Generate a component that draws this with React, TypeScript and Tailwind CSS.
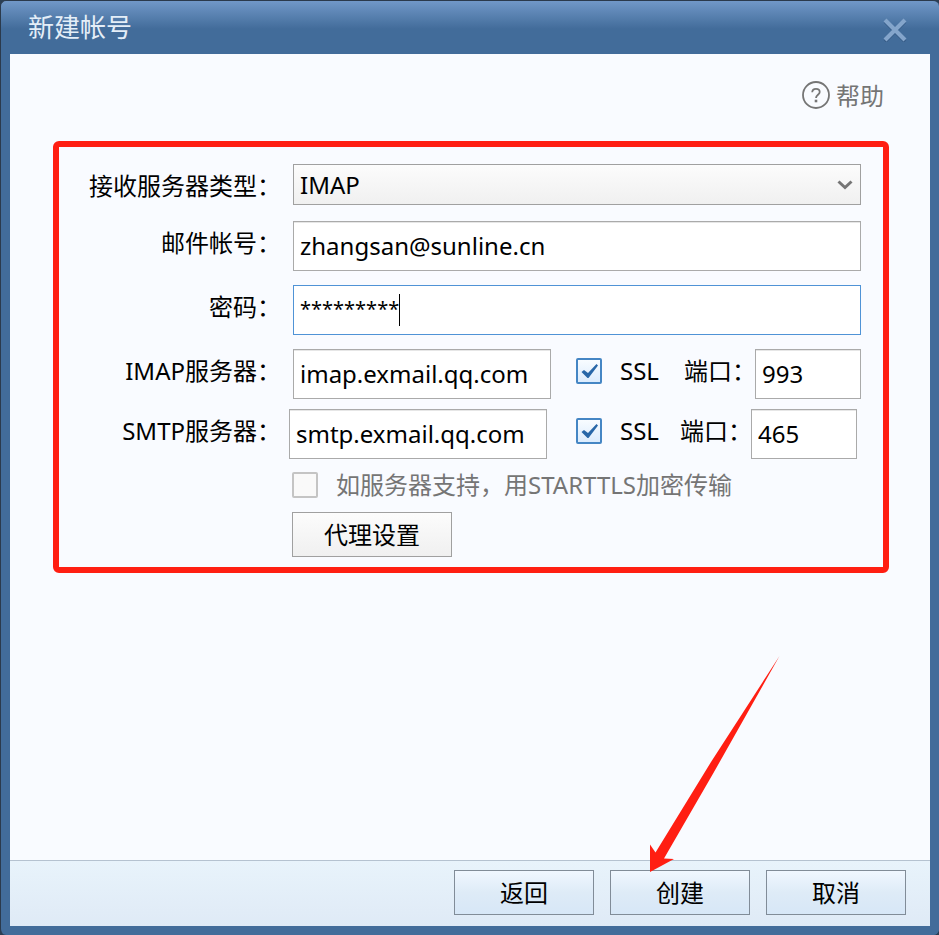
import { useState } from "react";
import type { ReactNode } from "react";

const FIELD =
  "h-[50px] min-w-0 border border-[#aaaaaa] bg-white px-1.5 pb-0.5 text-black shadow-[inset_0_1px_0_#e6e6e6] outline-none";
const LABEL = "w-[222px] shrink-0 text-right leading-[43px] whitespace-nowrap";
const FOOTER_BUTTON =
  "h-[45px] w-[140px] border border-[#818c98] bg-linear-to-b from-[#f0f7ff] via-[#deebf7] to-[#d7e7f7] text-black";

function HelpIcon() {
  return (
    <svg className="mb-[3px] size-7" viewBox="0 0 28 28" fill="none" stroke="#757575" aria-hidden="true">
      <circle cx="14" cy="14" r="13" strokeWidth="1.8" />
      <path d="M10.2 11.2C10.3 8.8 11.8 7.8 14 7.8s3.7 1.3 3.7 3.2c0 2.6-3.7 2.9-3.7 6" strokeWidth="1.8" />
      <path d="M12.7 20h2.6" strokeWidth="2.6" />
    </svg>
  );
}

function CloseIcon() {
  return (
    <svg className="size-6" viewBox="0 0 24 24" fill="none" aria-hidden="true">
      <path d="M2 3.5l20 20M22 3.5l-20 20" stroke="#365c87" strokeWidth="3.6" />
      <path d="M2 2l20 20M22 2L2 22" stroke="#84a5cb" strokeWidth="4.2" />
    </svg>
  );
}

function Arrow() {
  return (
    <svg
      className="pointer-events-none absolute bottom-[43px] left-10 h-[216px] w-[130px]"
      viewBox="0 0 130 216"
      fill="#ff1e12"
      aria-hidden="true"
    >
      <path d="M129.500 0L64 116L14 202.500L24 203L0 216V188.500L5.500 196.500L61 106Z" />
    </svg>
  );
}

function CheckBox({ id, defaultChecked, disabled }: { id: string; defaultChecked?: boolean; disabled?: boolean }) {
  const [checked, setChecked] = useState(!!defaultChecked);
  return (
    <span className="relative block size-[26px] shrink-0">
      <input
        id={id}
        type="checkbox"
        checked={checked}
        disabled={disabled}
        onChange={() => setChecked(!checked)}
        className="block size-[26px] appearance-none rounded-[2px] border-2 border-[#4586c4] bg-linear-to-b from-[#f8fcff] to-[#dcecfd] disabled:border-[#c4c4c4] disabled:from-[#f9f9f9] disabled:to-[#f9f9f9]"
      />
      {checked && (
        <svg className="pointer-events-none absolute inset-0 size-[26px]" viewBox="0 0 26 26" aria-hidden="true">
          <path d="M5.500 14L8 12L12 15L20.500 6L22 7.500L12.500 20H11.500Z" fill="#2867a8" />
        </svg>
      )}
    </span>
  );
}

function Row({ id, label, children }: { id: string; label: string; children: ReactNode }) {
  return (
    <div className="flex items-start gap-3">
      <label htmlFor={id} className={LABEL}>
        {label}
      </label>
      {children}
    </div>
  );
}

function ServerRow({ name, host, port, compact }: { name: string; host: string; port: string; compact?: boolean }) {
  return (
    <div className={compact ? "flex items-start pr-1" : "flex items-start"}>
      <label htmlFor={name} className={LABEL}>
        {name}服务器：
      </label>
      <input
        id={name}
        defaultValue={host}
        className={`${FIELD} flex-1 ${compact ? "mr-[29px] ml-2" : "mr-[25px] ml-3"}`}
      />
      <span className="flex h-[44px] items-center gap-[18px]">
        <CheckBox id={`${name}-ssl`} defaultChecked />
        <label htmlFor={`${name}-ssl`} className="w-10">
          SSL
        </label>
      </span>
      <label
        htmlFor={`${name}-port`}
        className={`w-[71px] leading-[43px] whitespace-nowrap ${compact ? "ml-5" : "ml-6"}`}
      >
        端口：
      </label>
      <input id={`${name}-port`} defaultValue={port} className={`${FIELD} w-[106px]`} />
    </div>
  );
}

export default function App() {
  return (
    <div className="min-h-screen bg-[#2b3f55] font-['Noto_Sans','Noto_Sans_CJK_SC',sans-serif] text-[24px] leading-8 text-black">
      <div className="flex min-h-screen flex-col rounded-md border-t border-l border-[#2b3a4c] bg-[#426c9a] bg-linear-to-b from-[#7198c8] to-[#426c9a] to-[28px] pr-[9px] pb-[9px] pl-[9px]">
        <header className="flex h-[53px] items-center justify-between pr-[23px] pl-[18px]">
          <h1 className="pb-0.5 text-[26px] text-[#e4eef8]">新建帐号</h1>
          <button type="button" aria-label="关闭" className="mt-1">
            <CloseIcon />
          </button>
        </header>

        <main className="flex flex-1 flex-col bg-[#f9fbff]">
          <div className="flex justify-end pt-6 pr-[46px]">
            <a href="#help" className="flex items-center gap-1.5 text-[#757575]">
              <HelpIcon />
              <span className="leading-9">帮助</span>
            </a>
          </div>

          <form className="mt-[27px] mr-[41px] ml-[43px] rounded-md border-[6px] border-[#ff1e12] pt-[17px] pr-[22px] pb-2.5">
            <div className="flex flex-col gap-3.5">
              <Row id="type" label="接收服务器类型：">
                <div className="relative flex-1">
                  <select
                    id="type"
                    className="block h-[41px] w-full appearance-none border border-[#a0a0a0] bg-linear-to-b from-[#fcfcfc] to-[#f0f0f0] px-1.5 text-black"
                  >
                    <option>IMAP</option>
                    <option>POP3</option>
                  </select>
                  <svg
                    className="pointer-events-none absolute top-4 right-2 h-[10px] w-4"
                    viewBox="0 0 16 10"
                    fill="none"
                    stroke="#757575"
                    strokeWidth="3"
                    aria-hidden="true"
                  >
                    <path d="M1.500 1.500L8 7.500L14.500 1.500" />
                  </svg>
                </div>
              </Row>
              <Row id="account" label="邮件帐号：">
                <input id="account" defaultValue="zhangsan@sunline.cn" className={`${FIELD} flex-1`} />
              </Row>
              <Row id="password" label="密码：">
                <div className="flex h-[50px] flex-1 border border-[#4f93d6] bg-white pt-2 pl-1.5">
                  <input
                    id="password"
                    defaultValue="*********"
                    className="field-sizing-content h-8 pb-0.5 text-[20px] outline-none"
                  />
                  <span className="h-8 w-px bg-black" />
                </div>
              </Row>
              <div className="flex flex-col gap-2.5">
                <ServerRow name="IMAP" host="imap.exmail.qq.com" port="993" />
                <ServerRow name="SMTP" host="smtp.exmail.qq.com" port="465" compact />
              </div>
            </div>
            <div className="mt-2.5 ml-[233px] flex flex-col items-start gap-[11px]">
              <div className="flex items-center gap-[18px] text-[#757575]">
                <CheckBox id="starttls" disabled />
                <label htmlFor="starttls">如服务器支持，用STARTTLS加密传输</label>
              </div>
              <button
                type="button"
                className="h-[45px] w-40 border border-[#a0a0a0] bg-linear-to-b from-[#fcfcfc] to-[#f0f0f0]"
              >
                代理设置
              </button>
            </div>
          </form>
        </main>

        <footer className="flex justify-end gap-4 border-t border-[#b5c2d0] bg-linear-to-b from-[#e8f3fb] to-[#dfeaf6] pt-[9px] pr-6 pb-[11px]">
          <button type="button" className={FOOTER_BUTTON}>
            返回
          </button>
          <div className="relative">
            <button type="button" className={FOOTER_BUTTON}>
              创建
            </button>
            <Arrow />
          </div>
          <button type="button" className={FOOTER_BUTTON}>
            取消
          </button>
        </footer>
      </div>
    </div>
  );
}
